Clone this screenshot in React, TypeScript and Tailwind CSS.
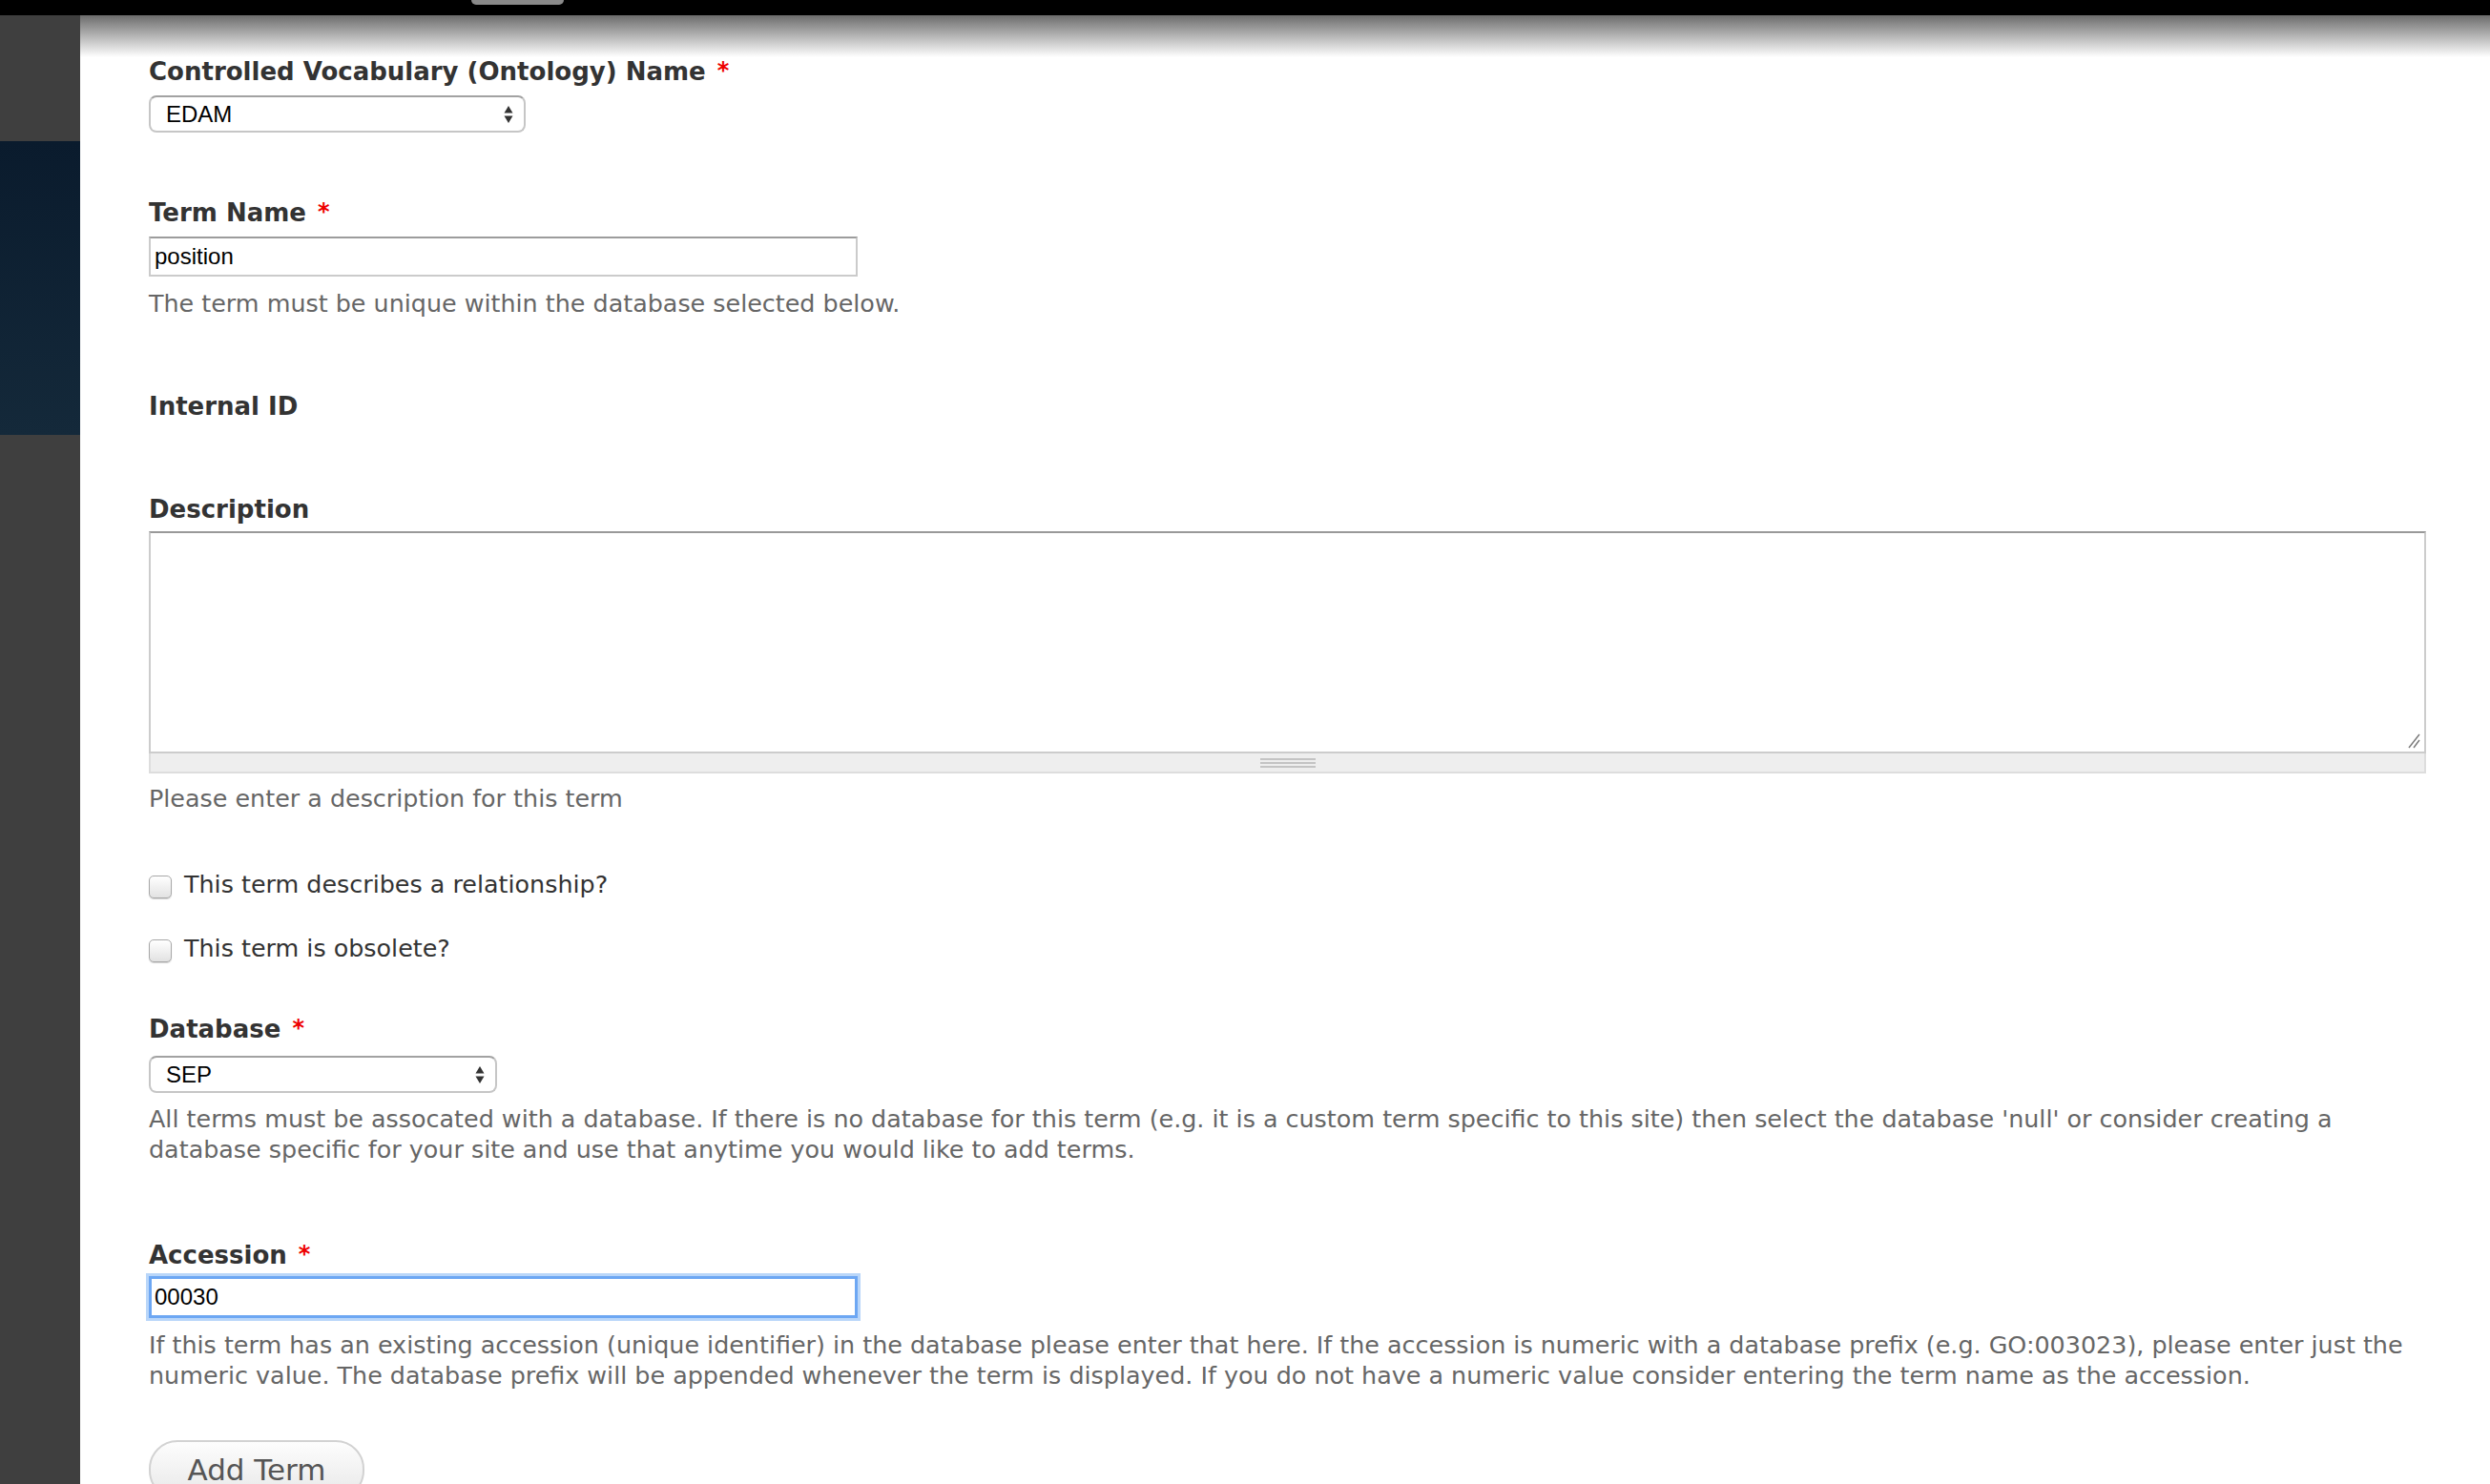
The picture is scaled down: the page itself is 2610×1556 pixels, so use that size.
import React from "react";

function Req() {
  return <span className="ml-[12px] align-top text-[24px] font-bold leading-[30px] text-[#ee0000]">*</span>;
}

function Label({ children, req, className = "" }: { children: React.ReactNode; req?: boolean; className?: string }) {
  return (
    <div className={`h-[32px] whitespace-nowrap text-[26px] font-bold leading-[32px] text-[#333333] ${className}`}>
      {children}
      {req && <Req />}
    </div>
  );
}

function Arrows() {
  return (
    <svg width="10" height="20" viewBox="0 0 10 20" className="shrink-0">
      <polygon points="0.5,8.5 5,1 9.5,8.5" fill="#333" />
      <polygon points="0.5,11.5 9.5,11.5 5,19" fill="#333" />
    </svg>
  );
}

function Checkbox() {
  return (
    <div className="mt-[6px] h-[24px] w-[24px] shrink-0 rounded-[5px] border border-[#a8a8a8] bg-[linear-gradient(to_bottom,#ffffff,#e2e2e2)] shadow-[0_1px_1px_rgba(0,0,0,0.18)]" />
  );
}

export default function App() {
  return (
    <div className="flex h-[1556px] w-full flex-col overflow-hidden bg-white font-['DejaVu_Sans',sans-serif]">
      <div className="flex h-[16px] shrink-0 items-start bg-black">
        <div className="ml-[494px] h-[5px] w-[97px] rounded-b-[10px] bg-[#8a8a8a]" />
      </div>
      <div className="flex min-h-0 flex-1">
        <div className="flex w-[84px] shrink-0 flex-col">
          <div className="h-[132px] bg-[#3f3f3f]" />
          <div className="h-[308px] bg-[linear-gradient(to_bottom,#0a1b2d,#14293a)]" />
          <div className="flex-1 bg-[#3f3f3f]" />
        </div>
        <div className="min-w-0 flex-1 bg-white bg-[linear-gradient(to_bottom,#6c6c6c,#ffffff_44px)] bg-no-repeat pl-[72px] pr-[67px] pt-[43px]">
          <Label req>Controlled Vocabulary (Ontology) Name</Label>
          <div className="mt-[9px] flex h-[39px] w-[395px] items-center justify-between rounded-[8px] border-2 border-[#c6c6c6] border-t-[#a2a2a2] bg-white pl-[16px] pr-[11px] font-['Liberation_Sans',Arial,sans-serif] text-[24px] leading-none text-black">
            <span>EDAM</span>
            <Arrows />
          </div>

          <Label req className="mt-[68px]">Term Name</Label>
          <div className="mt-[9px] flex h-[42px] w-[743px] items-center border-2 border-[#cbcbcb] border-t-[#9c9c9c] bg-white pl-[4px] font-['Liberation_Sans',Arial,sans-serif] text-[24px] leading-none text-black">
            position
          </div>
          <div className="mt-[12px] whitespace-nowrap text-[25.4px] leading-[32px] text-[#666666]">
            The term must be unique within the database selected below.
          </div>

          <Label className="mt-[76px]">Internal ID</Label>

          <Label className="mt-[76px]">Description</Label>
          <div className="mt-[7px] w-full">
            <div className="relative h-[233px] border-2 border-[#cccccc] border-t-[#999999] bg-white">
              <svg width="14" height="16" viewBox="0 0 14 16" className="absolute bottom-[3px] right-[4px]">
                <line x1="13" y1="1" x2="2" y2="15" stroke="#777" strokeWidth="1.4" />
                <line x1="13" y1="7" x2="7" y2="15" stroke="#777" strokeWidth="1.4" />
              </svg>
            </div>
            <div className="flex h-[21px] items-center justify-center border-2 border-t-0 border-[#dddddd] bg-[#eeeeee]">
              <div className="flex w-[58px] flex-col gap-[2px]">
                <div className="h-[2px] bg-[#c4c4c4]" />
                <div className="h-[2px] bg-[#c4c4c4]" />
                <div className="h-[2px] bg-[#c4c4c4]" />
              </div>
            </div>
          </div>
          <div className="mt-[10px] whitespace-nowrap text-[25.4px] leading-[32px] text-[#666666]">
            Please enter a description for this term
          </div>

          <div className="mt-[58px] flex h-[32px] items-center gap-[13px]">
            <Checkbox />
            <span className="whitespace-nowrap text-[25.4px] leading-[32px] text-[#333333]">This term describes a relationship?</span>
          </div>
          <div className="mt-[35px] flex h-[32px] items-center gap-[13px]">
            <Checkbox />
            <span className="whitespace-nowrap text-[25.4px] leading-[32px] text-[#333333]">This term is obsolete?</span>
          </div>

          <Label req className="mt-[53px]">Database</Label>
          <div className="mt-[12px] flex h-[39px] w-[365px] items-center justify-between rounded-[8px] border-2 border-[#c6c6c6] border-t-[#a2a2a2] bg-white pl-[16px] pr-[11px] font-['Liberation_Sans',Arial,sans-serif] text-[24px] leading-none text-black">
            <span>SEP</span>
            <Arrows />
          </div>
          <div className="mt-[11px] text-[25.4px] leading-[32px] text-[#666666]">
            All terms must be assocated with a database. If there is no database for this term (e.g. it is a custom term specific to this site) then select the database 'null' or consider creating a
            <br />
            database specific for your site and use that anytime you would like to add terms.
          </div>

          <Label req className="mt-[79px]">Accession</Label>
          <div className="mt-[6px] flex h-[44px] w-[743px] items-center border-[3px] border-[#6da7f3] bg-white pl-[3px] font-['Liberation_Sans',Arial,sans-serif] text-[24px] leading-none text-black shadow-[0_0_0_3px_#b9d6f9]">
            00030
          </div>
          <div className="mt-[12px] text-[25.4px] leading-[32px] text-[#666666]">
            If this term has an existing accession (unique identifier) in the database please enter that here. If the accession is numeric with a database prefix (e.g. GO:003023), please enter just the
            <br />
            numeric value. The database prefix will be appended whenever the term is displayed. If you do not have a numeric value consider entering the term name as the accession.
          </div>

          <div className="mt-[52px] flex h-[62px] w-[226px] items-center justify-center rounded-[30px] border-2 border-[#d2d2d2] bg-[linear-gradient(to_bottom,#fdfdfd,#e8e8e8)] text-[31px] leading-none text-[#555555]">
            Add Term
          </div>
        </div>
      </div>
    </div>
  );
}
